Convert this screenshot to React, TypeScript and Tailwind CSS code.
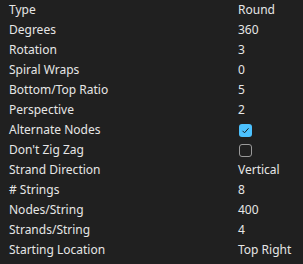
import React from "react";

type Row = { label: string; value?: string; check?: boolean };

const rows: Row[] = [
  { label: "Type", value: "Round" },
  { label: "Degrees", value: "360" },
  { label: "Rotation", value: "3" },
  { label: "Spiral Wraps", value: "0" },
  { label: "Bottom/Top Ratio", value: "5" },
  { label: "Perspective", value: "2" },
  { label: "Alternate Nodes", check: true },
  { label: "Don't Zig Zag", check: false },
  { label: "Strand Direction", value: "Vertical" },
  { label: "# Strings", value: "8" },
  { label: "Nodes/String", value: "400" },
  { label: "Strands/String", value: "4" },
  { label: "Starting Location", value: "Top Right" },
];

export default function App() {
  return (
    <div
      className="w-[303px] h-[264px] bg-[#202020] text-[#e6e6e6] text-[12px] pt-0"
      style={{ fontFamily: '"Segoe UI", "Noto Sans", "Open Sans", sans-serif' }}
    >
      {rows.map((r) => (
        <div key={r.label} className="flex h-[20px] items-center">
          <div className="w-[238px] pl-[9px] leading-none">{r.label}</div>
          <div className="flex-1 leading-none">
            {r.check === undefined ? (
              r.value
            ) : r.check ? (
              <div className="ml-[1px] w-[13px] h-[13px] rounded-[3px] bg-[#4cc2ff] flex items-center justify-center">
                <svg width="9" height="9" viewBox="0 0 9 9">
                  <path d="M1.5 4.8 L3.5 6.8 L7.5 2.3" fill="none" stroke="#1a1a1a" strokeWidth="1" />
                </svg>
              </div>
            ) : (
              <div className="ml-[1px] w-[13px] h-[13px] rounded-[3px] border border-[#9a9a9a]" />
            )}
          </div>
        </div>
      ))}
    </div>
  );
}
